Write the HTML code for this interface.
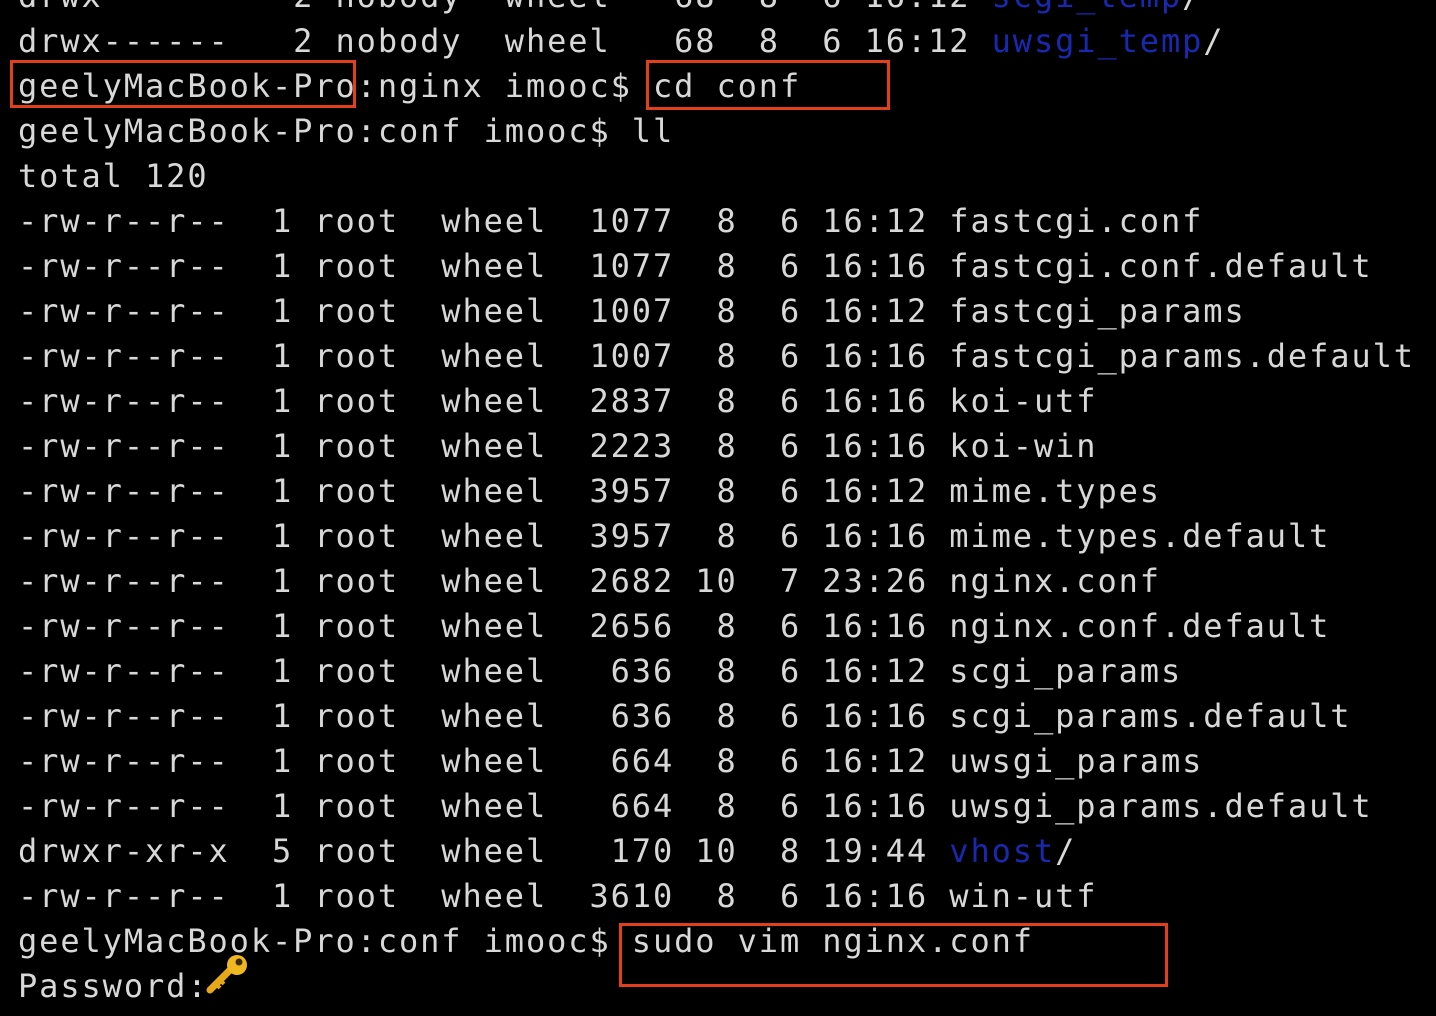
<!DOCTYPE html>
<html><head><meta charset="utf-8"><style>
html,body{margin:0;padding:0;background:#000;width:1436px;height:1016px;overflow:hidden}
#t{position:absolute;left:18px;top:-26px;font-family:"DejaVu Sans Mono","Liberation Mono",monospace;font-size:32px;letter-spacing:1.9px;color:#d8d8d8;white-space:pre;line-height:45px}
.b{color:#1a28b0}
.box{position:absolute;border:3px solid #e2401d;box-sizing:border-box}
</style></head><body>
<div id="t">drwx------   2 nobody  wheel   68  8  6 16:12 <span class="b">scgi_temp</span>/
drwx------   2 nobody  wheel   68  8  6 16:12 <span class="b">uwsgi_temp</span>/
geelyMacBook-Pro:nginx imooc$ cd conf
geelyMacBook-Pro:conf imooc$ ll
total 120
-rw-r--r--  1 root  wheel  1077  8  6 16:12 fastcgi.conf
-rw-r--r--  1 root  wheel  1077  8  6 16:16 fastcgi.conf.default
-rw-r--r--  1 root  wheel  1007  8  6 16:12 fastcgi_params
-rw-r--r--  1 root  wheel  1007  8  6 16:16 fastcgi_params.default
-rw-r--r--  1 root  wheel  2837  8  6 16:16 koi-utf
-rw-r--r--  1 root  wheel  2223  8  6 16:16 koi-win
-rw-r--r--  1 root  wheel  3957  8  6 16:12 mime.types
-rw-r--r--  1 root  wheel  3957  8  6 16:16 mime.types.default
-rw-r--r--  1 root  wheel  2682 10  7 23:26 nginx.conf
-rw-r--r--  1 root  wheel  2656  8  6 16:16 nginx.conf.default
-rw-r--r--  1 root  wheel   636  8  6 16:12 scgi_params
-rw-r--r--  1 root  wheel   636  8  6 16:16 scgi_params.default
-rw-r--r--  1 root  wheel   664  8  6 16:12 uwsgi_params
-rw-r--r--  1 root  wheel   664  8  6 16:16 uwsgi_params.default
drwxr-xr-x  5 root  wheel   170 10  8 19:44 <span class="b">vhost</span>/
-rw-r--r--  1 root  wheel  3610  8  6 16:16 win-utf
geelyMacBook-Pro:conf imooc$ sudo vim nginx.conf
Password:</div>
<svg style="position:absolute;left:206px;top:954px" width="44" height="42" viewBox="0 0 44 42">
<path d="M4 36 L24 16" stroke="#e6a81a" stroke-width="7" stroke-linecap="round"/>
<path d="M10 30 l4 4 M14 26 l4 4" stroke="#e6a81a" stroke-width="4"/>
<circle cx="31" cy="11" r="10" fill="#f0b820"/>
<circle cx="33" cy="8" r="3.5" fill="#3a2a00"/>
</svg>
<div class="box" style="left:10px;top:60px;width:346px;height:48px"></div>
<div class="box" style="left:646px;top:60px;width:244px;height:50px"></div>
<div class="box" style="left:619px;top:923px;width:549px;height:64px"></div>
</body></html>
